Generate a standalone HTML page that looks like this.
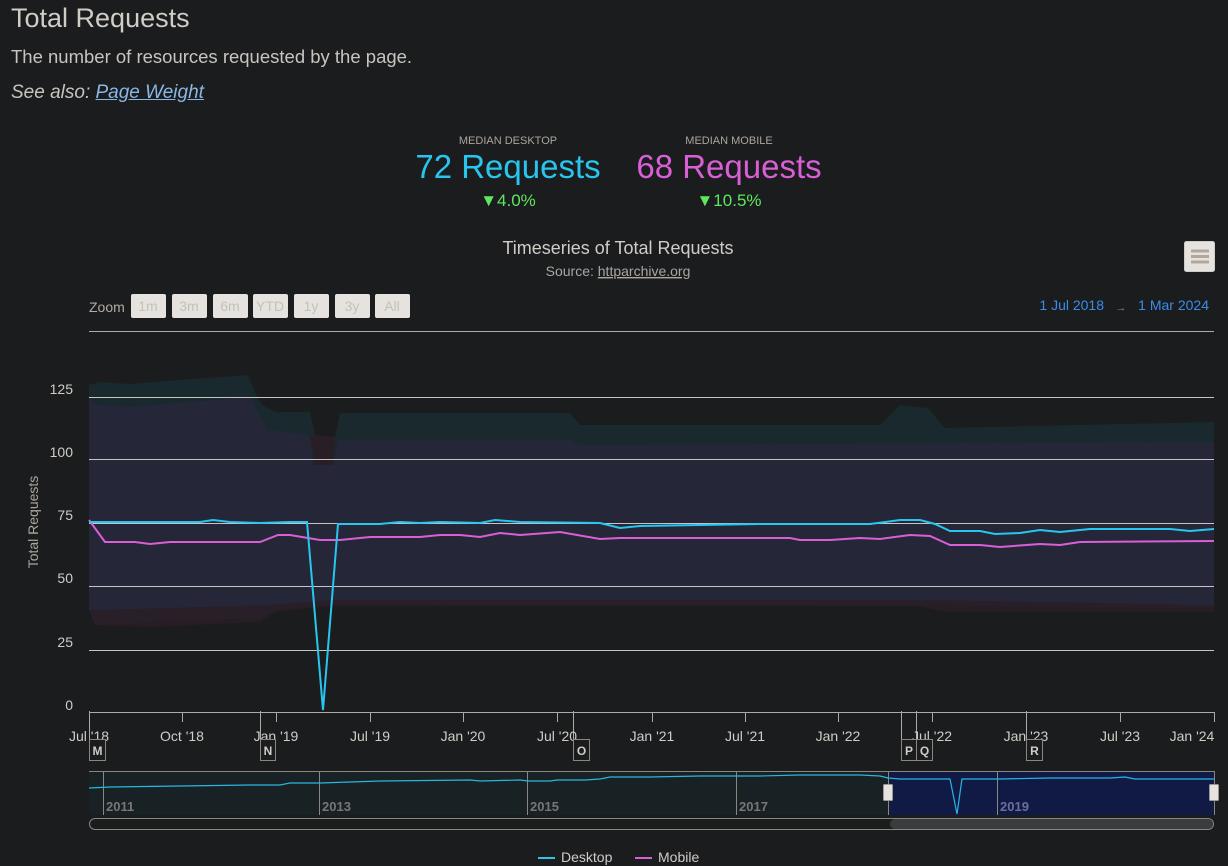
<!DOCTYPE html>
<html><head><meta charset="utf-8"><style>
html,body{margin:0;padding:0;background:#1b1c1e;width:1228px;height:866px;overflow:hidden;font-family:"Liberation Sans",sans-serif;color:#d8d4cf}
.abs{position:absolute;white-space:nowrap}
</style></head><body>
<div class="abs" style="left:11px;top:3px;font-size:27px;color:#d0ccc6">Total Requests</div>
<div class="abs" style="left:11px;top:46px;font-size:18.5px;color:#c8c4be">The number of resources requested by the page.</div>
<div class="abs" style="left:11px;top:82px;font-size:19px;font-style:italic;color:#c8c4be">See also: <span style="color:#8ab8e6;text-decoration:underline">Page Weight</span></div>

<div class="abs" style="left:408px;top:135px;width:200px;text-align:center;font-size:11px;color:#aaa6a0">MEDIAN DESKTOP</div>
<div class="abs" style="left:400px;top:148px;width:216px;text-align:center;font-size:33px;color:#28c6ef">72 Requests</div>
<div class="abs" style="left:408px;top:191px;width:200px;text-align:center;font-size:17px;color:#5ee85e">▼4.0%</div>
<div class="abs" style="left:621px;top:135px;width:216px;text-align:center;font-size:11px;color:#aaa6a0">MEDIAN MOBILE</div>
<div class="abs" style="left:621px;top:148px;width:216px;text-align:center;font-size:33px;color:#d95fd6">68 Requests</div>
<div class="abs" style="left:629px;top:191px;width:200px;text-align:center;font-size:17px;color:#5ee85e">▼10.5%</div>

<svg width="1228" height="866" style="position:absolute;left:0;top:0" font-family="Liberation Sans, sans-serif">
<text x="618" y="254" text-anchor="middle" font-size="18" fill="#d0ccc6">Timeseries of Total Requests</text>
<text x="618" y="276" text-anchor="middle" font-size="14" fill="#aaa6a0">Source: <tspan text-decoration="underline">httparchive.org</tspan></text>
<rect x="1184.5" y="241.5" width="30" height="30" rx="2" fill="#e6e3df" stroke="#ccc"/>
<g stroke="#b0a89e" stroke-width="3"><line x1="1191" y1="251" x2="1209" y2="251"/><line x1="1191" y1="256.5" x2="1209" y2="256.5"/><line x1="1191" y1="262" x2="1209" y2="262"/></g>
<text x="89" y="312" font-size="14" fill="#b0aca6">Zoom</text>
<g font-size="14" fill="#c4c0ba" text-anchor="middle">
<rect x="131" y="294" width="35" height="24" rx="2" fill="#e6e3df"/><text x="148" y="311">1m</text>
<rect x="172" y="294" width="35" height="24" rx="2" fill="#e6e3df"/><text x="189" y="311">3m</text>
<rect x="213" y="294" width="35" height="24" rx="2" fill="#e6e3df"/><text x="230" y="311">6m</text>
<rect x="253" y="294" width="35" height="24" rx="2" fill="#e6e3df"/><text x="270" y="311">YTD</text>
<rect x="294" y="294" width="35" height="24" rx="2" fill="#e6e3df"/><text x="311" y="311">1y</text>
<rect x="335" y="294" width="35" height="24" rx="2" fill="#e6e3df"/><text x="352" y="311">3y</text>
<rect x="375" y="294" width="35" height="24" rx="2" fill="#e6e3df"/><text x="392" y="311">All</text>
</g>
<text x="1104" y="310" font-size="14" fill="#3d8be8" text-anchor="end">1 Jul 2018</text>
<text x="1121" y="311" font-size="11" fill="#888" text-anchor="middle">→</text>
<text x="1209" y="310" font-size="14" fill="#3d8be8" text-anchor="end">1 Mar 2024</text>

<polygon fill="#19292d" points="89,385 100,382 130,384 180,380 248,375 255,392 262,405 275,412 310,412 315,435 335,437 340,413 570,413 580,425 880,425 900,405 928,408 945,428 1214,422 1214,605 940,600 920,597 510,598 500,594 490,598 330,600 270,605 89,610"/>
<polygon fill="#252739" points="89,397 98,405 130,407 250,397 258,412 268,430 310,435 313,465 333,465 338,440 570,440 580,445 1214,442 1214,608 920,605 330,604 275,610 260,618 150,622 95,625 89,610"/>
<polygon fill="#2a1e26" points="310,435 315,465 333,465 335,437" />
<polygon fill="#2a1e26" opacity="0.8" points="89,610 95,625 150,627 260,622 275,612 330,606 920,606 945,612 1214,612 1214,605 940,600 330,600 270,605"/>
<g stroke="#c8c4bf" stroke-width="1">
<line x1="89" y1="331.5" x2="1214" y2="331.5" stroke="#aaa"/>
<line x1="89" y1="397.5" x2="1214" y2="397.5"/>
<line x1="89" y1="459.5" x2="1214" y2="459.5"/>
<line x1="89" y1="523.5" x2="1214" y2="523.5"/>
<line x1="89" y1="586.5" x2="1214" y2="586.5"/>
<line x1="89" y1="650.5" x2="1214" y2="650.5"/>
<line x1="89" y1="712.5" x2="1214" y2="712.5" stroke="#aaa"/>
</g>
<g font-size="14" fill="#d0ccc6" text-anchor="end">
<text x="73" y="394">125</text><text x="73" y="457">100</text><text x="73" y="520">75</text><text x="73" y="583">50</text><text x="73" y="647">25</text><text x="73" y="710">0</text>
</g>
<text transform="translate(38,522) rotate(-90)" text-anchor="middle" font-size="14" fill="#aaa6a0">Total Requests</text>

<polyline fill="none" stroke="#d95fd6" stroke-width="2" points="89,520 105,542 135,542 150,544 170,542 260,542 278,535 290,535 320,540 340,540 370,537 420,537 440,535 460,535 480,537 500,533 520,535 560,532 600,539 620,538 790,538 800,540 830,540 860,538 880,539 910,535 930,536 950,545 980,545 1000,547 1040,544 1060,545 1080,542 1214,541"/>
<polyline fill="none" stroke="#28c6ef" stroke-width="2" points="89,522 200,522 213,520 230,522 260,523 290,522 307,522 323,710 338,524 380,524 400,522 420,523 440,522 480,523 495,520 520,522 600,523 620,528 640,526 760,524 870,524 900,520 920,520 935,524 950,531 980,531 995,534 1020,533 1040,530 1060,532 1090,529 1170,529 1190,531 1214,529"/>

<g stroke="#aaa" stroke-width="1">
<line x1="182.5" y1="712" x2="182.5" y2="722"/><line x1="276.5" y1="712" x2="276.5" y2="722"/><line x1="370.5" y1="712" x2="370.5" y2="722"/><line x1="463.5" y1="712" x2="463.5" y2="722"/><line x1="557.5" y1="712" x2="557.5" y2="722"/><line x1="652.5" y1="712" x2="652.5" y2="722"/><line x1="745.5" y1="712" x2="745.5" y2="722"/><line x1="838.5" y1="712" x2="838.5" y2="722"/><line x1="932.5" y1="712" x2="932.5" y2="722"/><line x1="1026.5" y1="712" x2="1026.5" y2="722"/><line x1="1120.5" y1="712" x2="1120.5" y2="722"/><line x1="1214.5" y1="712" x2="1214.5" y2="722"/>
<line x1="89.5" y1="711" x2="89.5" y2="740"/><line x1="260.5" y1="711" x2="260.5" y2="740"/><line x1="573.5" y1="711" x2="573.5" y2="740"/><line x1="901.5" y1="711" x2="901.5" y2="740"/><line x1="916.5" y1="711" x2="916.5" y2="740"/><line x1="1026.5" y1="711" x2="1026.5" y2="740"/>
</g>
<g font-size="14" fill="#d0ccc6" text-anchor="middle">
<text x="89" y="741">Jul '18</text><text x="182" y="741">Oct '18</text><text x="276" y="741">Jan '19</text><text x="370" y="741">Jul '19</text><text x="463" y="741">Jan '20</text><text x="557" y="741">Jul '20</text><text x="652" y="741">Jan '21</text><text x="745" y="741">Jul '21</text><text x="838" y="741">Jan '22</text><text x="932" y="741">Jul '22</text><text x="1026" y="741">Jan '23</text><text x="1120" y="741">Jul '23</text><text x="1192" y="741">Jan '24</text>
</g>
<g fill="#1b1c1e" stroke="#8a8680">
<rect x="89.5" y="739.5" width="16" height="21"/><rect x="260.5" y="739.5" width="15" height="21"/><rect x="573.5" y="739.5" width="16" height="21"/><rect x="901.5" y="739.5" width="15" height="21"/><rect x="916.5" y="739.5" width="16" height="21"/><rect x="1026.5" y="739.5" width="16" height="21"/>
</g>
<g font-size="12" font-weight="bold" fill="#d0ccc6" text-anchor="middle">
<text x="97.5" y="755">M</text><text x="268" y="755">N</text><text x="581.5" y="755">O</text><text x="909" y="755">P</text><text x="924.5" y="755">Q</text><text x="1034.5" y="755">R</text>
</g>
<rect x="89" y="771" width="799" height="44" fill="#182124"/>
<rect x="888" y="771" width="326" height="44" fill="#111a45"/>
<line x1="89" y1="771.5" x2="1214" y2="771.5" stroke="#8a8680"/>
<g stroke="#8a8680"><line x1="103.5" y1="771" x2="103.5" y2="815"/><line x1="319.5" y1="771" x2="319.5" y2="815"/><line x1="527.5" y1="771" x2="527.5" y2="815"/><line x1="736.5" y1="771" x2="736.5" y2="815"/><line x1="997.5" y1="771" x2="997.5" y2="815"/><line x1="888.5" y1="771" x2="888.5" y2="815"/><line x1="1214.5" y1="771" x2="1214.5" y2="815"/></g>
<g font-size="13" font-weight="bold" fill="#777"><text x="106" y="811">2011</text><text x="322" y="811">2013</text><text x="530" y="811">2015</text><text x="739" y="811">2017</text><text x="1000" y="811" fill="#6a7099">2019</text></g>
<polyline fill="none" stroke="#28b6df" stroke-width="1.2" points="89,788 110,787 180,786 250,785 280,785 290,783 320,783 380,781 470,780 480,781 520,780 528,781 550,781 557,780 585,780 600,779 610,777 650,777 700,776 736,776 760,776 800,775 860,775 880,776 888,778 900,779 950,779 957,814 962,779 1000,779 1050,778 1110,778 1125,777 1135,779 1214,779"/>
<rect x="883.5" y="784.5" width="9" height="16" rx="1" fill="#e6e3df" stroke="#999"/>
<rect x="1209.5" y="784.5" width="9" height="16" rx="1" fill="#e6e3df" stroke="#999"/>
<rect x="89.5" y="818.5" width="1124" height="11" rx="5.5" fill="#1b1c1e" stroke="#8a8680"/>
<rect x="890" y="819" width="323" height="10" rx="5" fill="#3a3c3f"/>
<line x1="538" y1="858" x2="555" y2="858" stroke="#28c6ef" stroke-width="2"/>
<text x="561" y="862" font-size="14" fill="#d0ccc6">Desktop</text>
<line x1="635" y1="858" x2="652" y2="858" stroke="#d95fd6" stroke-width="2"/>
<text x="658" y="862" font-size="14" fill="#d0ccc6">Mobile</text>
</svg>
</body></html>
